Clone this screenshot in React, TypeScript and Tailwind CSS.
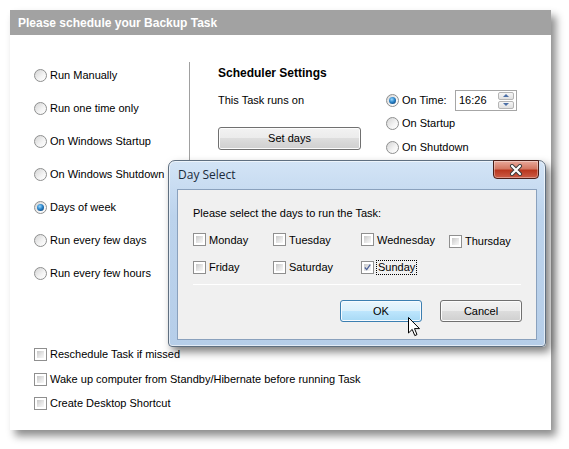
import React from "react";

const font = "font-['Liberation_Sans',Arial,sans-serif]";

function Radio({ checked }: { checked?: boolean }) {
  return (
    <span className="w-[13px] h-[13px] shrink-0 rounded-full border border-[#8e8f8f] bg-[linear-gradient(135deg,#d4d4d4,#f4f4f4_60%,#ffffff)] flex items-center justify-center">
      {checked && (
        <span className="w-[7px] h-[7px] rounded-full bg-[radial-gradient(circle_at_40%_35%,#9ad8ff,#2a84c9_45%,#0c3e73_90%)]" />
      )}
    </span>
  );
}

function Check({ checked }: { checked?: boolean }) {
  return (
    <span className="w-[13px] h-[13px] shrink-0 border border-[#8f8f8f] bg-white p-[2px] flex">
      <span className="flex-1 bg-[linear-gradient(135deg,#c8c8c8,#e8e8e8_60%,#f8f8f8)] relative">
        {checked && (
          <svg viewBox="0 0 9 9" className="absolute inset-0 w-full h-full overflow-visible">
            <path d="M1 4.5 L3.5 7.2 L8 0.8" fill="none" stroke="#4a5f97" strokeWidth="1.6" />
          </svg>
        )}
      </span>
    </span>
  );
}

function RadioRow({ label, checked }: { label: string; checked?: boolean }) {
  return (
    <div className="h-[33px] flex items-center gap-[3px]">
      <Radio checked={checked} />
      <span>{label}</span>
    </div>
  );
}

function CheckRow({ label, checked, focus }: { label: string; checked?: boolean; focus?: boolean }) {
  return (
    <div className="flex items-center gap-[3px]">
      <Check checked={checked} />
      <span className={focus ? "outline outline-1 outline-dotted outline-black px-[1px] leading-[13px]" : ""}>{label}</span>
    </div>
  );
}

function Cursor() {
  return (
    <svg viewBox="0 0 12 20" className="absolute left-[408px] top-[317px] w-[12px] h-[20px]">
      <path d="M0.5 0.5 L0.5 16 L4.2 12.4 L6.8 18.6 L9 17.6 L6.5 11.6 L11.5 11.6 Z" fill="#fff" stroke="#000" strokeWidth="1" />
    </svg>
  );
}

export default function App() {
  const radios = [
    "Run Manually",
    "Run one time only",
    "On Windows Startup",
    "On Windows Shutdown",
    "Days of week",
    "Run every few days",
    "Run every few hours",
  ];

  return (
    <div className={`relative w-[569px] h-[449px] bg-white overflow-hidden text-[11px] text-black ${font}`}>
      <div className="absolute left-[10px] top-[10px] w-[541px] h-[420px] bg-white shadow-[5px_6px_8px_rgba(0,0,0,0.45)] flex flex-col">
        <div className="h-[25px] bg-[#a2a2a2] text-white font-bold text-[12px] pl-[8px] flex items-center">
          Please schedule your Backup Task
        </div>

        <div className="h-[300px] flex">
          <div className="w-[179px] pl-[24px] pt-[24px]">
            {radios.map((r) => (
              <RadioRow key={r} label={r} checked={r === "Days of week"} />
            ))}
          </div>
          <div className="w-px h-[270px] mt-[27px] bg-[#a0a0a0]" />
          <div className="flex-1 pl-[28px] pt-[31px]">
            <div className="font-bold text-[12px] h-[14px] leading-[14px]">Scheduler Settings</div>
            <div className="flex mt-[9px]">
              <div className="w-[168px]">
                <div className="h-[22px] flex items-center">This Task runs on</div>
                <button className="mt-[16px] w-[143px] h-[23px] rounded-[3px] border border-[#707070] bg-[linear-gradient(#f2f2f2,#ebebeb_50%,#dddddd_50%,#cfcfcf)] shadow-[inset_0_0_0_1px_#fcfcfc]">
                  Set days
                </button>
              </div>
              <div className="flex flex-col">
                <div className="h-[22px] flex items-center gap-[3px]">
                  <Radio checked />
                  <span className="w-[50px]">On Time:</span>
                  <div className="w-[62px] h-[21px] border border-[#a6a6a6] flex items-center pl-[3px] pr-[2px] bg-white">
                    <span className="flex-1">16:26</span>
                    <div className="w-[16px] h-[17px] flex flex-col gap-px">
                      <div className="flex-1 border border-[#b5b5b5] rounded-[2px] bg-[linear-gradient(#f6f6f6,#e0e0e0)] flex items-center justify-center">
                        <span className="w-0 h-0 border-l-[3px] border-r-[3px] border-b-[3px] border-l-transparent border-r-transparent border-b-[#4c6fa6]" />
                      </div>
                      <div className="flex-1 border border-[#b5b5b5] rounded-[2px] bg-[linear-gradient(#f6f6f6,#e0e0e0)] flex items-center justify-center">
                        <span className="w-0 h-0 border-l-[3px] border-r-[3px] border-t-[3px] border-l-transparent border-r-transparent border-t-[#4c6fa6]" />
                      </div>
                    </div>
                  </div>
                </div>
                <div className="h-[24px] flex items-center gap-[3px]">
                  <Radio />
                  <span>On Startup</span>
                </div>
                <div className="h-[24px] flex items-center gap-[3px]">
                  <Radio />
                  <span>On Shutdown</span>
                </div>
              </div>
            </div>
          </div>
        </div>

        <div className="mx-[24px] h-px bg-[#a0a0a0] border-b border-white" />
        <div className="pl-[24px] mt-[6px] flex flex-col">
          <div className="h-[25px] flex items-center"><CheckRow label="Reschedule Task if missed" /></div>
          <div className="h-[24px] flex items-center"><CheckRow label="Wake up computer from Standby/Hibernate before running Task" /></div>
          <div className="h-[24px] flex items-center"><CheckRow label="Create Desktop Shortcut" /></div>
        </div>
      </div>

      {/* Day Select dialog */}
      <div className="absolute left-[168px] top-[160px] w-[378px] h-[187px] rounded-t-[7px] rounded-b-[4px] border border-[#5f6f80] bg-[linear-gradient(#d3e4f6,#bcd3ec_30%,#b6cee9)] shadow-[4px_5px_8px_rgba(0,0,0,0.5),inset_0_0_0_1px_rgba(255,255,255,0.6)] flex flex-col">
        <div className="h-[28px] flex items-center pl-[9px] text-[12px] text-[#1b2b3c] font-['Open_Sans','Noto_Sans',sans-serif] relative">
          Day Select
          <div className="absolute right-[6px] top-[-1px] w-[46px] h-[19px] rounded-b-[4px] border border-[#4a1e18] bg-[linear-gradient(#e9a99b,#d47863_45%,#b9371f_55%,#cc5d47)] shadow-[inset_0_0_0_1px_rgba(255,255,255,0.35)] flex items-center justify-center">
            <svg viewBox="0 0 14 12" className="w-[14px] h-[12px]">
              <path d="M3 2 L11 10 M11 2 L3 10" stroke="#3a3a3a" strokeWidth="4" strokeLinecap="round" />
              <path d="M3 2 L11 10 M11 2 L3 10" stroke="#ffffff" strokeWidth="2.2" strokeLinecap="round" />
            </svg>
          </div>
        </div>
        <div className="mx-[8px] h-[151px] border border-[#8aa1bd] bg-[#f0f0f0] pl-[15px] pr-[14px] flex flex-col">
          <div className="mt-[16px] h-[14px] leading-[14px]">Please select the days to run the Task:</div>
          <div className="mt-[10px] h-[18px] grid grid-cols-[80px_88px_88px_auto] items-center">
            <CheckRow label="Monday" />
            <CheckRow label="Tuesday" />
            <CheckRow label="Wednesday" />
            <div className="mt-[3px]"><CheckRow label="Thursday" /></div>
          </div>
          <div className="mt-[10px] h-[18px] grid grid-cols-[80px_88px_88px_auto] items-center">
            <CheckRow label="Friday" />
            <CheckRow label="Saturday" />
            <CheckRow label="Sunday" checked focus />
          </div>
          <div className="mt-[8px] mr-[1px] h-px bg-[#a0a0a0] border-b border-white" />
          <div className="mt-[15px] flex justify-end gap-[18px]">
            <button className="w-[82px] h-[22px] rounded-[3px] border border-[#3c7fb1] bg-[linear-gradient(#eaf6fd,#d9f0fc_50%,#bee6fd_50%,#a7d9f5)] shadow-[inset_0_0_0_1px_#f7fbff]">
              OK
            </button>
            <button className="w-[82px] h-[22px] rounded-[3px] border border-[#707070] bg-[linear-gradient(#f2f2f2,#ebebeb_50%,#dddddd_50%,#cfcfcf)] shadow-[inset_0_0_0_1px_#fcfcfc]">
              Cancel
            </button>
          </div>
        </div>
      </div>

      <Cursor />
    </div>
  );
}
